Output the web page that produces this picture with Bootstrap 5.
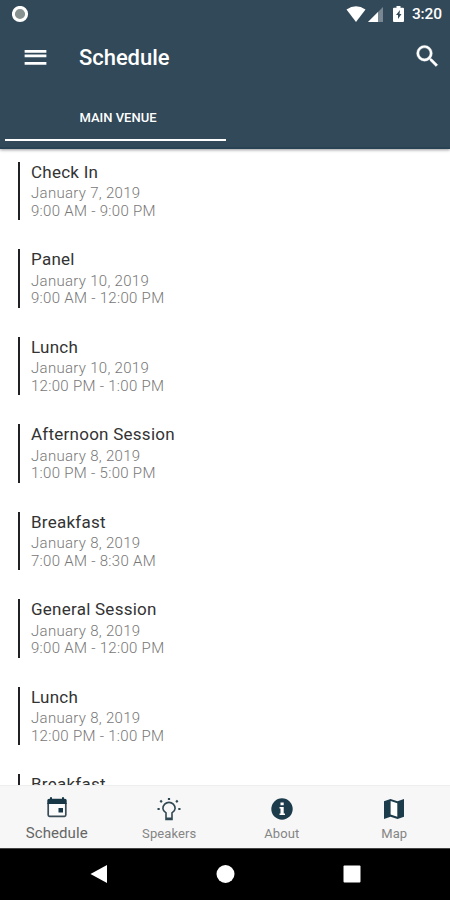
<!DOCTYPE html>
<html lang="en">
<head>
<meta charset="utf-8">
<meta name="viewport" content="width=device-width, initial-scale=1">
<title>Schedule</title>
<link href="https://cdn.jsdelivr.net/npm/bootstrap@5.3.0/dist/css/bootstrap.min.css" rel="stylesheet">
<style>
  body { font-family: Roboto, sans-serif; height: 900px; color: #333; }
  svg { display: block; flex: none; }
  .app-header { background: #314959; height: 149px; border-bottom: 2px solid #284454; box-shadow: 0 1px 3px rgba(0,0,0,.4); z-index: 1; }
  .status-bar { height: 28px; padding: 0 8px 0 12px; }
  .clock { font-size: 15.5px; font-weight: 500; line-height: 29px; letter-spacing: -.1px; margin-left: 5px; }
  .toolbar { height: 58px; margin-bottom: 2px; padding: 0 8px 0 21px; }
  .screen-title { font-size: 22px; font-weight: 500; line-height: 28px; margin: 1px 0 0 29px; letter-spacing: -.05px; }
  .venue-tab { width: 221px; height: 53px; margin-left: 5px; padding: 21px 0 0 5px; border-bottom: 2px solid #fff; font-size: 13px; font-weight: 500; line-height: 17px; }
  .sessions { padding-top: 12.5px; }
  .session { height: 58.5px; margin: 0 0 29px 18px; padding-left: 11px; border-left: 2px solid #202124; flex: none; }
  .session-name { font-size: 17px; line-height: 21px; letter-spacing: .25px; font-weight: 400; margin: 0 0 2.6px; }
  .session-info { font-size: 15px; line-height: 17.5px; letter-spacing: .3px; color: #777; font-weight: 300; }
  .bottom-tabs { height: 63px; background: #f7f7f7; border-top: 1px solid #eee; }
  .bottom-tab { font-size: 13px; line-height: 16px; color: #858585; padding: 11px 0 0 1px; gap: 5px; letter-spacing: .1px; }
  .bottom-tab.selected { font-size: 15px; color: #666; gap: 6px; }
  .system-nav { height: 52px; background: #000; border-top: 1px solid #444; padding: 0 54px 2px; }
</style>
</head>
<body class="d-flex flex-column overflow-hidden bg-white">
<header class="app-header text-white flex-shrink-0 position-relative">
  <div class="status-bar d-flex align-items-center justify-content-between">
    <svg width="17" height="17" viewBox="0 0 17 17"><circle cx="8" cy="8" r="6.600" fill="#87918f" stroke="#fff" stroke-width="3"/></svg>
    <div class="d-flex align-items-center">
      <svg width="62" height="18" viewBox="0 0 62 18" fill="#fff">
        <path d="M1.500 4.500Q11-2 20.500 4.500L11 17z"/>
        <path d="M38 2v15H23z" fill="#798792"/><path d="M33 7v10H23z"/>
        <path d="M51.500 1h4v1.800h2.500q1 0 1 1V16q0 1-1 1h-9q-1 0-1-1V3.800q0-1 1-1h2.500z"/>
        <path d="M55 5l-4 5h2v4l3.500-5h-2z" fill="#314959"/>
      </svg>
      <span class="clock">3:20</span>
    </div>
  </div>
  <div class="toolbar d-flex align-items-center">
    <svg width="29" height="29" viewBox="0 0 24 24" fill="#fff"><path d="M3 18.200h18v-2.300H3v2.300zm0-6.150h18v-2.300H3v2.300zm0-6.150v2.300h18V5.900H3z" transform="translate(0 -.2)"/></svg>
    <h1 class="screen-title">Schedule</h1>
    <svg class="ms-auto" width="29" height="29" viewBox="0 0 24 24" fill="#fff" stroke="#fff" stroke-width=".3"><path transform="translate(0 -1)" d="M15.500 14h-.79l-.28-.27A6.471 6.471 0 0 0 16 9.500 6.500 6.500 0 1 0 9.500 16c1.610 0 3.090-.59 4.230-1.570l.27.28v.79l5 4.990L20.490 19l-4.990-5zm-6 0C7.010 14 5 11.990 5 9.500S7.010 5 9.500 5 14 7.010 14 9.500 11.990 14 9.500 14z"/></svg>
  </div>
  <div class="venue-tab text-center">MAIN VENUE</div>
</header>

<main class="sessions d-flex flex-column flex-grow-1 overflow-hidden">
  <article class="session"><h2 class="session-name">Check In</h2><div class="session-info">January 7, 2019<br>9:00 AM - 9:00 PM</div></article>
  <article class="session"><h2 class="session-name">Panel</h2><div class="session-info">January 10, 2019<br>9:00 AM - 12:00 PM</div></article>
  <article class="session"><h2 class="session-name">Lunch</h2><div class="session-info">January 10, 2019<br>12:00 PM - 1:00 PM</div></article>
  <article class="session"><h2 class="session-name">Afternoon Session</h2><div class="session-info">January 8, 2019<br>1:00 PM - 5:00 PM</div></article>
  <article class="session"><h2 class="session-name">Breakfast</h2><div class="session-info">January 8, 2019<br>7:00 AM - 8:30 AM</div></article>
  <article class="session"><h2 class="session-name">General Session</h2><div class="session-info">January 8, 2019<br>9:00 AM - 12:00 PM</div></article>
  <article class="session"><h2 class="session-name">Lunch</h2><div class="session-info">January 8, 2019<br>12:00 PM - 1:00 PM</div></article>
  <article class="session"><h2 class="session-name">Breakfast</h2></article>
</main>

<nav class="bottom-tabs row g-0 flex-shrink-0">
  <div class="bottom-tab selected col d-flex flex-column align-items-center">
    <svg width="22" height="22" viewBox="0 0 22 22"><path d="M2.200 6v12q0 1.300 1.300 1.300h15q1.300 0 1.300-1.300V6" fill="#fbfbfb" stroke="#3a4c57" stroke-width="1.700"/><path d="M1.300 7V3.500q0-1.800 1.800-1.800H4V.300h2v1.400h10V.300h2v1.400h.9q1.800 0 1.800 1.800V7zM12.500 11H17v4.500h-4.500z" fill="#173746"/></svg>
    <span>Schedule</span>
  </div>
  <div class="bottom-tab col d-flex flex-column align-items-center">
    <svg width="24" height="24" viewBox="0 0 24 24" fill="none" stroke="#304852" stroke-width="1.600"><path d="M9 18v-2.200C7 14.500 5.900 12.900 5.900 11.500a6.100 6.100 0 0 1 12.200 0c0 1.400-1.100 3-3.100 4.300V18M9 17.500v5h6v-5"/><path d="M9 20.500h6v2.500H9z" fill="#304852" stroke="none"/><path d="M12 1v2M3.300 3.500l1.600 1.600M20.700 3.500l-1.600 1.600M.500 12h2.200M21.300 12h2.200" stroke-width="2.200"/></svg>
    <span>Speakers</span>
  </div>
  <div class="bottom-tab col d-flex flex-column align-items-center">
    <svg width="24" height="24" viewBox="0 0 24 24"><circle cx="12" cy="12" r="10.700" fill="#1c3b4b"/><path d="M10.500 5.500h3.200v2.800h-3.200zM9.500 10h4.200v6.500h1.300V18H9.500v-1.500h1v-5h-1z" fill="#fff"/></svg>
    <span>About</span>
  </div>
  <div class="bottom-tab col d-flex flex-column align-items-center">
    <svg width="24" height="24" viewBox="0 0 24 24"><path d="M2 4.200L8.500 2l7 2.300L22 2v17.800L15.500 22l-7-2.300L2 22z" fill="#1c3b4b"/><path d="M8.600 4l6.700 2.200v13.600l-6.700-2.200z" fill="#fff"/></svg>
    <span>Map</span>
  </div>
</nav>
<footer class="system-nav d-flex align-items-center flex-shrink-0">
  <svg class="w-100" height="20" viewBox="0 0 342 20" fill="#fff"><path d="M36.500 10L53 1v18z"/><circle cx="171.500" cy="10" r="9"/><rect x="289.500" y="1.500" width="17" height="17" rx="1"/></svg>
</footer>
<script src="https://cdn.jsdelivr.net/npm/bootstrap@5.3.0/dist/js/bootstrap.bundle.min.js"></script>
</body>
</html>
